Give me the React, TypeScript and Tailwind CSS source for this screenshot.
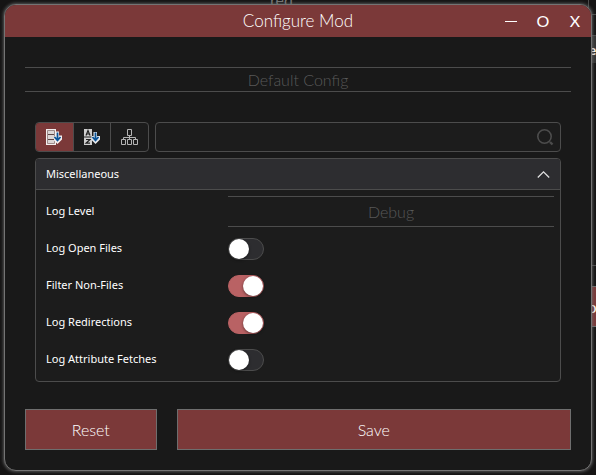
import { useState } from "react";

const LATO = "font-['Lato',sans-serif]";

function SortCategoryIcon() {
  return (
    <svg width="16" height="16" viewBox="0 0 16 16" fill="none" aria-hidden="true">
      <path d="M0 0h10v16H0z" fill="#f4efef" />
      <path d="M1.500 1.500h7v13h-7z" fill="#dcd6d6" stroke="#8a7676" strokeWidth=".8" />
      <path d="M2 5.500h6M2 10.500h6" stroke="#5c4646" />
      <path d="M9.500 2.500h3.500v4h3v4l-4.500 4.500-3.500-3.500v-4h1.500z" fill="#f4efef" />
      <path d="M11.500 3.500v8M8.500 8l3 3.300 3-3.300" stroke="#0a5398" strokeWidth="1.800" />
    </svg>
  );
}

function SortAlphaIcon() {
  return (
    <svg width="16" height="16" viewBox="0 0 16 16" fill="none" aria-hidden="true">
      <path d="M0 0h8v7.500H0zM0 8.500h8V16H0z" fill="#cfcfcf" />
      <path d="M2 6.500L4 1.500l2 5M2.800 5h2.400M2 10.500h4l-4 3.700h4" stroke="#222" strokeWidth="1.200" />
      <path d="M9.500 3h3.500v4h3v3.500l-4.500 4.500L7.500 11V7h2z" fill="#e4e8ec" />
      <path d="M11.500 3.500v8M8.500 8l3 3.300 3-3.300" stroke="#0a5398" strokeWidth="1.800" />
    </svg>
  );
}

function TreeIcon() {
  return (
    <svg width="17" height="17" viewBox="0 0 17 17" fill="none" stroke="#b4b4b4" aria-hidden="true">
      <path d="M6.500 .5h4v6h-4zM.5 10.500h4v5h-4zM6.500 10.500h4v5h-4zM12.500 10.500h4v5h-4zM8.500 6.500v4M2.500 10.500v-2h12v2" />
    </svg>
  );
}

function Toggle({ id, initial }: { id: string; initial: boolean }) {
  const [on, setOn] = useState(initial);
  return (
    <span className="relative flex h-[22px] w-9">
      <input
        id={id}
        type="checkbox"
        role="switch"
        checked={on}
        onChange={() => setOn(!on)}
        className="peer h-full w-full appearance-none rounded-full border border-[#4c4c4c] bg-[#2d2d30] checked:border-[#b96264] checked:bg-[#b96264]"
      />
      <span className="pointer-events-none absolute top-px left-px size-5 rounded-full bg-white shadow-[0_1px_3px_rgba(0,0,0,0.5)] peer-checked:left-[15px]" />
    </span>
  );
}

const toggles = [
  { id: "open-files", label: "Log Open Files", on: false },
  { id: "non-files", label: "Filter Non-Files", on: true },
  { id: "redirections", label: "Log Redirections", on: true },
  { id: "attributes", label: "Log Attribute Fetches", on: false },
];

const sorts = [
  { label: "Sort by category", icon: <SortCategoryIcon /> },
  { label: "Sort by name", icon: <SortAlphaIcon /> },
  { label: "Group as tree", icon: <TreeIcon /> },
];

function Backdrop() {
  return (
    <div className={`absolute inset-0 overflow-hidden ${LATO}`} aria-hidden="true">
      <span className="absolute -top-2 left-[270px] text-base leading-4 text-[#777]">red</span>
      <div className="absolute top-0 right-0 h-[266px] w-2 border-b border-l border-[#4c4c4c]" />
      <div className="absolute top-[14px] right-0 h-px w-2 bg-[#4c4c4c]" />
      <div className="absolute top-[35px] right-0 flex h-7 w-2 items-center justify-center overflow-hidden border-t border-[#4c4c4c] bg-[#333] text-sm font-bold text-white">
        <span className="pl-2">ev</span>
      </div>
      <div className="absolute top-[286px] right-0 flex h-[41px] w-2 items-center justify-center border-y border-[#6e6e6e] bg-[#7b3939] text-base text-white">
        o
      </div>
    </div>
  );
}

export default function App() {
  const [sort, setSort] = useState(0);
  return (
    <div className="relative min-h-screen overflow-hidden bg-[#151414] p-1">
      <Backdrop />
      <main className="relative overflow-hidden rounded-xl border border-[#747474] bg-[#191919] text-white shadow-[0_0_3px_1px_rgba(110,110,110,0.7)]">
        <header className={`grid h-8 grid-cols-[1fr_auto_1fr] items-center bg-[#7b3939] font-light ${LATO}`}>
          <h1 className="col-start-2 text-[17px] leading-6 font-light">Configure Mod</h1>
          <div className="flex justify-end">
            <button aria-label="Minimize" className="flex h-8 w-8 items-center justify-center">
              <span className="h-px w-3 bg-white" />
            </button>
            <button aria-label="Maximize" className="h-8 w-8 text-base font-normal">O</button>
            <button aria-label="Close" className="h-8 w-8 text-base font-normal">X</button>
          </div>
        </header>

        <div className="px-5 pt-[30px] pb-5">
          <select
            aria-label="Configuration"
            className={`block h-[25px] w-full appearance-none border-y border-[#4c4c4c] bg-transparent text-center text-base leading-6 font-light text-[#585858] [text-align-last:center] ${LATO}`}
          >
            <option>Default Config</option>
          </select>

          <section className="px-[10px] pt-[30px] font-['Noto_Sans',sans-serif] text-[11px]">
            <div className="flex gap-1.5">
              <div className="flex h-[30px] w-[114px] divide-x divide-[#4c4c4c] overflow-hidden rounded border border-[#4c4c4c] bg-[#1c1c1c]">
                {sorts.map((s, i) => (
                  <button
                    key={s.label}
                    aria-label={s.label}
                    aria-pressed={sort === i}
                    onClick={() => setSort(i)}
                    className="flex flex-1 items-center justify-center aria-pressed:bg-[#7b3939]"
                  >
                    {s.icon}
                  </button>
                ))}
              </div>
              <div className="flex h-[30px] flex-1 items-center rounded border border-[#4c4c4c] bg-[#1c1c1c] pr-1.5">
                <input aria-label="Search settings" className="h-full min-w-0 flex-1 bg-transparent px-2 outline-none" />
                <svg width="18" height="18" viewBox="0 0 18 18" fill="none" stroke="#4c4c4c" strokeWidth="1.600" aria-hidden="true">
                  <circle cx="8.500" cy="8.500" r="6.700" />
                  <path d="M14 14l2.500 2.500" strokeWidth="2.400" />
                </svg>
              </div>
            </div>

            <div className="mt-1.5 overflow-hidden rounded border border-[#4c4c4c] bg-[#1c1c1c]">
              <button aria-expanded="true" className="flex h-[31px] w-full items-center justify-between border-b border-[#4c4c4c] bg-[#2d2d30] px-[10px]">
                Miscellaneous
                <svg width="13" height="9" viewBox="0 0 13 9" fill="none" stroke="#e0e0e0" strokeWidth="1.300" aria-hidden="true">
                  <path d="M.8 7.500l5.700-5.700 5.700 5.700" />
                </svg>
              </button>
              <div className="grid grid-cols-[182px_1fr] items-center pt-[3px] pr-1.5 pb-[3px] pl-[10px] [grid-auto-rows:37px]">
                <label htmlFor="log-level">Log Level</label>
                <select
                  id="log-level"
                  className={`h-[31px] w-full appearance-none border-y border-[#4c4c4c] bg-transparent text-center text-base leading-6 font-light text-[#585858] [text-align-last:center] ${LATO}`}
                >
                  <option>Debug</option>
                </select>
                {toggles.map((t) => (
                  <div key={t.id} className="contents">
                    <label htmlFor={t.id}>{t.label}</label>
                    <Toggle id={t.id} initial={t.on} />
                  </div>
                ))}
              </div>
            </div>
          </section>

          <div className={`mt-[27px] grid grid-cols-[1fr_3fr] gap-5 text-base ${LATO}`}>
            <button className="h-[41px] border border-[#6e6e6e] bg-[#7b3939] font-light">Reset</button>
            <button className="h-[41px] border border-[#6e6e6e] bg-[#7b3939] font-light">Save</button>
          </div>
        </div>
      </main>
    </div>
  );
}
